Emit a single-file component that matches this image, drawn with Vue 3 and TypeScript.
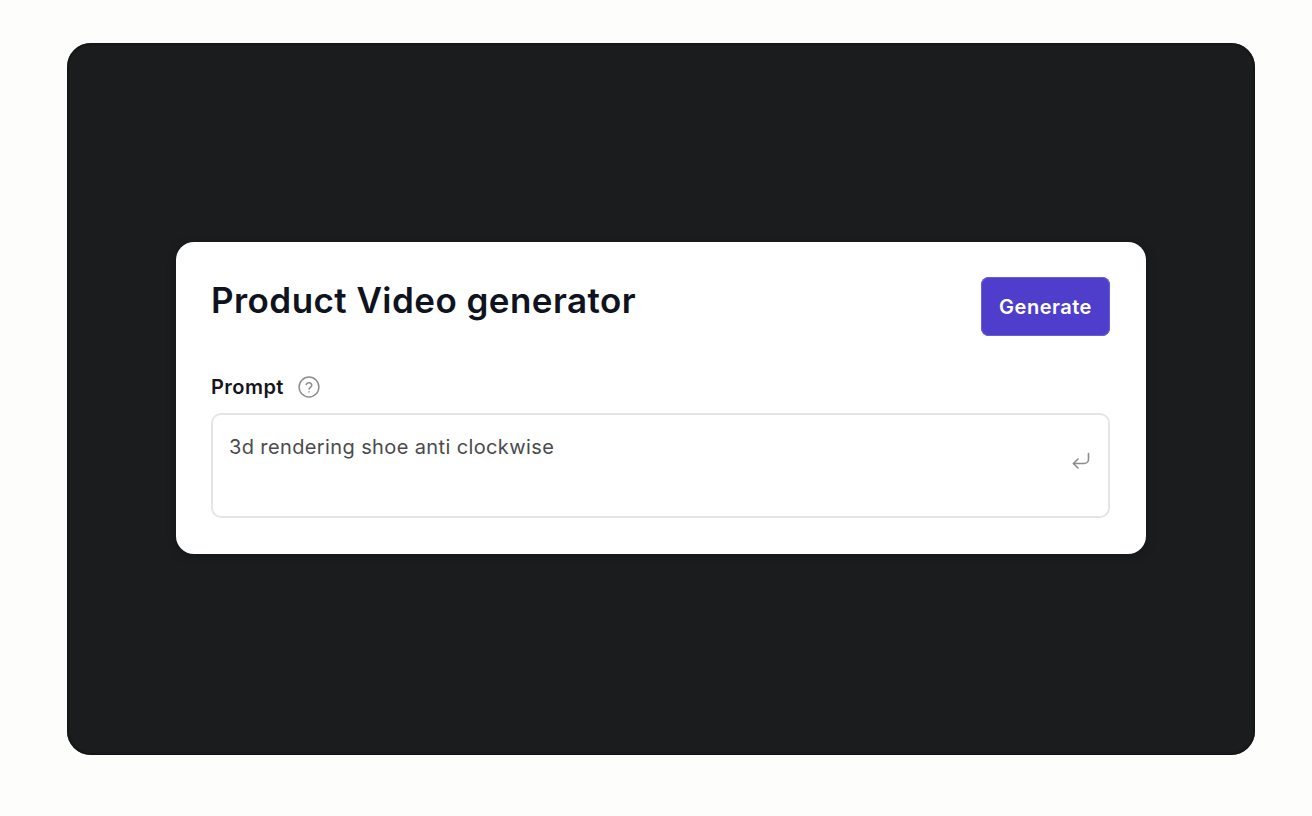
<script setup lang="ts">
const title = 'Product Video generator'
const prompt = '3d rendering shoe anti clockwise'
</script>

<template>
  <div class="page">
    <div class="stage">
      <section class="card">
        <header class="head">
          <h1 class="title">{{ title }}</h1>
          <button class="generate" type="button">Generate</button>
        </header>
        <div class="label-row">
          <span class="label">Prompt</span>
          <svg class="help" width="22" height="22" viewBox="0 0 22 22" fill="none" stroke="#8e8e8e" stroke-width="1.5" stroke-linecap="round" stroke-linejoin="round">
            <circle cx="11" cy="11" r="9.9" />
            <path d="M8.2 8.6a2.9 2.9 0 0 1 5.6.7c0 1.8-2.7 2.1-2.8 3.8" />
            <path d="M11 15.8v.1" />
          </svg>
        </div>
        <div class="field">
          <span class="value">{{ prompt }}</span>
          <svg class="enter" width="20" height="18" viewBox="0 0 20 18" fill="none" stroke="#8c8c8c" stroke-width="1.6" stroke-linecap="round" stroke-linejoin="round">
            <path d="M17.5 1.5v5.7a4.3 4.3 0 0 1-4.3 4.3H2.5" />
            <path d="M7 7l-4.6 4.5L7 16" />
          </svg>
        </div>
      </section>
    </div>
  </div>
</template>

<style>
html, body { margin: 0; background: #fdfefc; }
</style>

<style scoped>
.page {
  width: 1312px;
  height: 816px;
  box-sizing: border-box;
  padding: 43px 57px 61px 67px;
  background: #fdfefc;
  font-family: Inter, "Liberation Sans", sans-serif;
}
.stage {
  height: 100%;
  box-sizing: border-box;
  border-radius: 24px;
  background: #1b1c1e;
  box-shadow: inset 0 0 2px 1px #111113;
  padding: 199px 109px 0 109px;
}
.card {
  height: 312px;
  box-sizing: border-box;
  padding: 35px 36px 36px 35px;
  background: #fff;
  border-radius: 18px;
  box-shadow: 0 2px 10px rgba(0, 0, 0, 0.25);
  display: flex;
  flex-direction: column;
}
.head {
  display: flex;
  justify-content: space-between;
  align-items: flex-start;
}
.title {
  margin: -1px 0 0;
  font-size: 35px;
  line-height: 48px;
  font-weight: 600;
  letter-spacing: 0.45px;
  color: #0f1320;
}
.generate {
  width: 129px;
  height: 59px;
  border: none;
  padding: 1px 0 0;
  border-radius: 8px;
  background: #4f3ecb;
  box-shadow: inset 0 0 0 1px #6a5bd8;
  color: #fff;
  font: 600 20px/1 Inter, "Liberation Sans", sans-serif;
  letter-spacing: 0.5px;
}
.label-row {
  display: flex;
  align-items: center;
  gap: 14px;
  margin-top: 40px;
  height: 22px;
}
.label {
  font-size: 20px;
  font-weight: 600;
  letter-spacing: 0.45px;
  color: #14161c;
}
.field {
  margin-top: 15px;
  flex: 1;
  box-sizing: border-box;
  border: 2px solid #e6e5e1;
  border-radius: 10px;
  padding: 19px 16px;
  position: relative;
}
.value {
  font-size: 20px;
  line-height: 26px;
  letter-spacing: 0.38px;
  color: #4a4a4c;
  display: block;
}
.enter {
  position: absolute;
  right: 17px;
  top: 37px;
}
</style>
